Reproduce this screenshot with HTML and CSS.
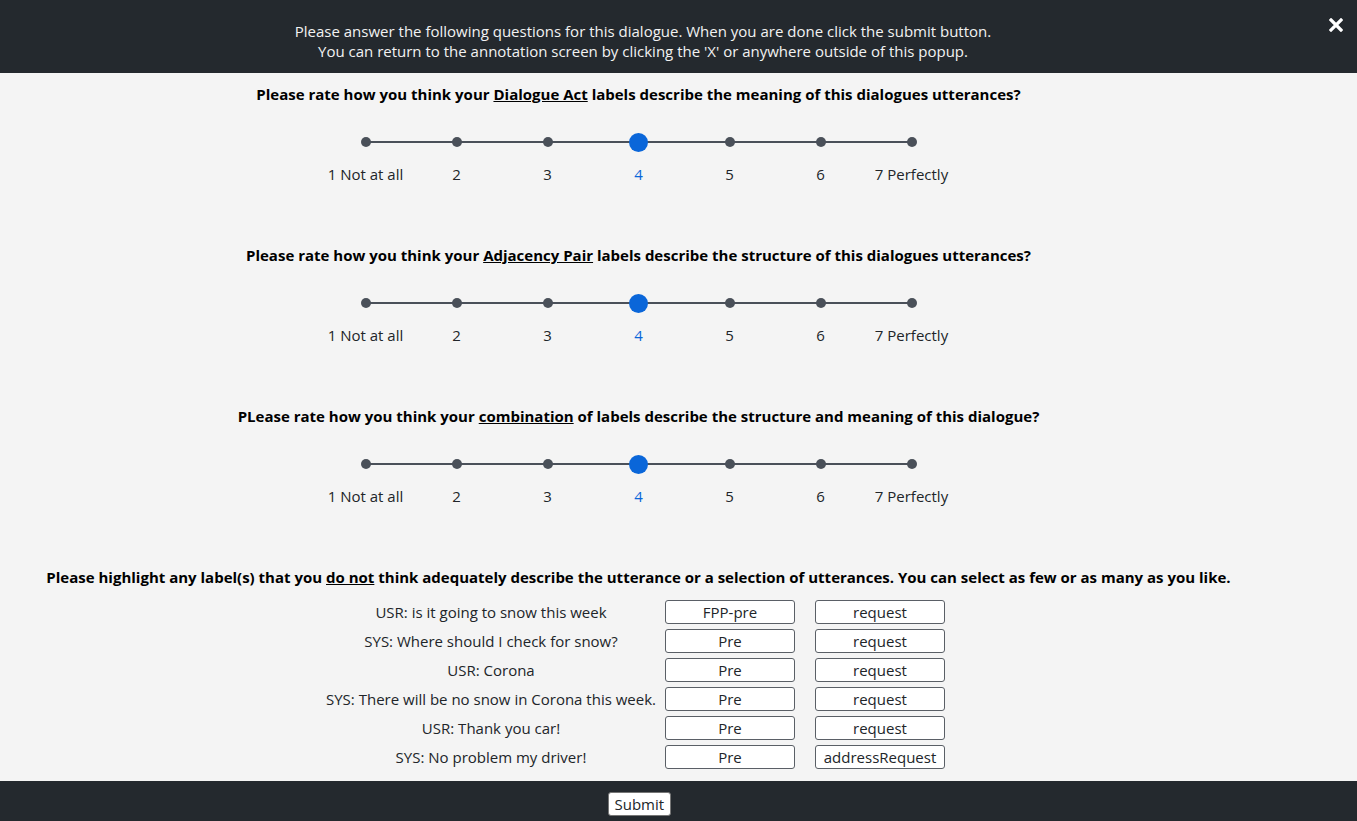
FILE: index.html
```html
<!DOCTYPE html>
<html lang="en">
<head>
<meta charset="utf-8">
<title>Dialogue questions</title>
<link rel="stylesheet" href="styles.css">
</head>
<body>
<div class="page">
  <header class="top">
    <p class="intro">Please answer the following questions for this dialogue. When you are done click the submit button.<br>You can return to the annotation screen by clicking the 'X' or anywhere outside of this popup.</p>
    <button class="close" aria-label="Close">
      <svg width="14" height="14" viewBox="0 0 14 14"><path d="M2 2 L12 12 M12 2 L2 12" stroke="#fff" stroke-width="3.2" stroke-linecap="square"/></svg>
    </button>
  </header>
  <main class="content">
    <section class="question">
      <h2 class="q-title">Please rate how you think your <u>Dialogue Act</u> labels describe the meaning of this dialogues utterances?</h2>
      <div class="scale">
        <div class="step"><span class="dot"></span><span class="lbl">1 Not at all</span></div>
        <div class="step"><span class="dot"></span><span class="lbl">2</span></div>
        <div class="step"><span class="dot"></span><span class="lbl">3</span></div>
        <div class="step sel"><span class="dot"></span><span class="lbl">4</span></div>
        <div class="step"><span class="dot"></span><span class="lbl">5</span></div>
        <div class="step"><span class="dot"></span><span class="lbl">6</span></div>
        <div class="step"><span class="dot"></span><span class="lbl">7 Perfectly</span></div>
      </div>
    </section>
    <section class="question">
      <h2 class="q-title">Please rate how you think your <u>Adjacency Pair</u> labels describe the structure of this dialogues utterances?</h2>
      <div class="scale">
        <div class="step"><span class="dot"></span><span class="lbl">1 Not at all</span></div>
        <div class="step"><span class="dot"></span><span class="lbl">2</span></div>
        <div class="step"><span class="dot"></span><span class="lbl">3</span></div>
        <div class="step sel"><span class="dot"></span><span class="lbl">4</span></div>
        <div class="step"><span class="dot"></span><span class="lbl">5</span></div>
        <div class="step"><span class="dot"></span><span class="lbl">6</span></div>
        <div class="step"><span class="dot"></span><span class="lbl">7 Perfectly</span></div>
      </div>
    </section>
    <section class="question">
      <h2 class="q-title">PLease rate how you think your <u>combination</u> of labels describe the structure and meaning of this dialogue?</h2>
      <div class="scale">
        <div class="step"><span class="dot"></span><span class="lbl">1 Not at all</span></div>
        <div class="step"><span class="dot"></span><span class="lbl">2</span></div>
        <div class="step"><span class="dot"></span><span class="lbl">3</span></div>
        <div class="step sel"><span class="dot"></span><span class="lbl">4</span></div>
        <div class="step"><span class="dot"></span><span class="lbl">5</span></div>
        <div class="step"><span class="dot"></span><span class="lbl">6</span></div>
        <div class="step"><span class="dot"></span><span class="lbl">7 Perfectly</span></div>
      </div>
    </section>
    <section class="highlight">
      <h2 class="q-title">Please highlight any label(s) that you <u>do not</u> think adequately describe the utterance or a selection of utterances. You can select as few or as many as you like.</h2>
      <table class="utts">
        <tr><td class="utt">USR: is it going to snow this week</td><td class="c1"><button class="tag">FPP-pre</button></td><td class="c2"><button class="tag">request</button></td></tr>
        <tr><td class="utt">SYS: Where should I check for snow?</td><td class="c1"><button class="tag">Pre</button></td><td class="c2"><button class="tag">request</button></td></tr>
        <tr><td class="utt">USR: Corona</td><td class="c1"><button class="tag">Pre</button></td><td class="c2"><button class="tag">request</button></td></tr>
        <tr><td class="utt">SYS: There will be no snow in Corona this week.</td><td class="c1"><button class="tag">Pre</button></td><td class="c2"><button class="tag">request</button></td></tr>
        <tr><td class="utt">USR: Thank you car!</td><td class="c1"><button class="tag">Pre</button></td><td class="c2"><button class="tag">request</button></td></tr>
        <tr><td class="utt">SYS: No problem my driver!</td><td class="c1"><button class="tag">Pre</button></td><td class="c2"><button class="tag">addressRequest</button></td></tr>
      </table>
    </section>
  </main>
  <footer class="bottom">
    <button class="submit">Submit</button>
  </footer>
</div>
</body>
</html>
```

FILE: styles.css
```css
* { box-sizing: border-box; }
html, body { margin: 0; padding: 0; }
body {
  font-family: "Open Sans", "Noto Sans", sans-serif;
  font-size: 15px;
  color: #212529;
  background: #f4f4f4;
}
.page {
  height: 100vh;
  display: flex;
  flex-direction: column;
}
.top {
  position: relative;
  height: 73px;
  flex: none;
  background: #24292e;
  color: #f2f2f2;
  padding-top: 21px;
}
.intro {
  width: 1286px;
  margin: 0;
  text-align: center;
  line-height: 20px;
}
.close {
  position: absolute;
  top: 18px;
  right: 14px;
  width: 14px;
  height: 14px;
  padding: 0;
  border: 0;
  background: none;
  display: flex;
}
.content {
  flex: 1;
  min-height: 0;
  overflow: hidden;
  width: 1277px;
  padding-top: 11px;
}
.q-title {
  margin: 0;
  font-size: 15px;
  font-weight: 700;
  line-height: 20px;
  color: #000;
  text-align: center;
  white-space: nowrap;
}
.question { margin-bottom: 61px; }
.scale {
  position: relative;
  width: 637px;
  margin: 28px auto 0;
  display: grid;
  grid-template-columns: repeat(7, 91px);
}
.scale::before {
  content: "";
  position: absolute;
  left: 45px;
  right: 46px;
  top: 9px;
  height: 2px;
  background: #4a5059;
}
.step {
  display: flex;
  flex-direction: column;
  align-items: center;
}
.dot {
  position: relative;
  width: 10px;
  height: 10px;
  margin: 5px 0;
  border-radius: 50%;
  background: #4a5059;
}
.sel .dot {
  width: 19px;
  height: 19px;
  margin: 0.5px 0;
  background: #0a66d9;
}
.lbl {
  margin-top: 12px;
  line-height: 20px;
  white-space: nowrap;
}
.sel .lbl { color: #0a66d9; }
.highlight .q-title { margin-bottom: 11px; }
.utts {
  margin: 0 auto;
  border-collapse: collapse;
}
.utts td { padding: 2px 0 3px; }
.utt {
  text-align: center;
  white-space: nowrap;
  line-height: 24px;
}
.c1 { padding-left: 9px !important; }
.c2 { padding-left: 20px !important; padding-right: 6px !important; }
.tag {
  display: block;
  width: 130px;
  height: 24px;
  padding: 0;
  font-family: inherit;
  font-size: 15px;
  color: #212529;
  background: #fff;
  border: 1px solid #5a5f66;
  border-radius: 3px;
}
.bottom {
  flex: none;
  height: 40px;
  width: 100%;
  background: #24292e;
  display: flex;
  align-items: center;
  padding-top: 6px;
}
.submit {
  height: 24px;
  padding: 0 6px;
  margin-left: calc(638.5px - 31px);
  font-family: inherit;
  font-size: 15px;
  color: #212529;
  background: #fff;
  border: 1px solid #767676;
  border-radius: 3px;
}
```
